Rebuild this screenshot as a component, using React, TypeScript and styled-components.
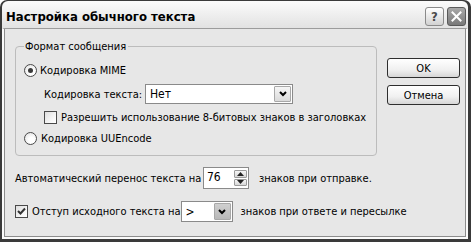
import React from "react";
import styled, { createGlobalStyle } from "styled-components";

const Global = createGlobalStyle`
  html, body { margin: 0; padding: 0; background: #ffffff; }
  body {
    font-family: "DejaVu Sans Condensed", "DejaVu Sans", sans-serif;
    font-stretch: condensed;
    font-size: 11px;
    color: #000;
  }
  * { box-sizing: border-box; }
`;

const Window = styled.div`
  width: 471px;
  height: 242px;
  display: flex;
  flex-direction: column;
  background: #3a3a3a;
  border-radius: 7px 7px 0 0;
  padding: 1px 3px 3px 2px;
`;

const TitleBar = styled.div`
  height: 27px;
  display: flex;
  align-items: flex-start;
  padding: 6px 2px 0 4px;
  background: linear-gradient(#fbfbfb, #ececec 60%, #e2e2e2);
  border-radius: 6px 6px 0 0;
`;

const TitleText = styled.div`
  flex: 1;
  font-weight: bold;
  font-size: 13px;
  line-height: 19px;
  color: #000;
  letter-spacing: 0;
`;

const TitleButton = styled.div<{ $dark?: boolean }>`
  width: 19px;
  height: 19px;
  margin-left: 3px;
  border-radius: 3px;
  border: 1px solid ${(p) => (p.$dark ? "#5a5a5a" : "#8a8a8a")};
  background: ${(p) =>
    p.$dark
      ? "linear-gradient(#a8a8a8, #7a7a7a)"
      : "linear-gradient(#ffffff, #d2d2d2)"};
  display: flex;
  align-items: center;
  justify-content: center;
  font-family: "DejaVu Sans", sans-serif;
  font-weight: bold;
  font-size: 13px;
  color: #4a4a4a;
`;

const Body = styled.div`
  flex: 1;
  display: flex;
  background: #e7e7e7;
  border-top: 1px solid #9c9c9c;
  border-left: 2px solid #fafafa;
  border-right: 2px solid #fafafa;
  border-bottom: 2px solid #fafafa;
  box-shadow: inset 1px 0 #8c8c8c, inset -1px 0 #8c8c8c, inset 0 -1px #8c8c8c;
  padding: 11px 0 0 11px;
`;

const LeftCol = styled.div`
  width: 362px;
  display: flex;
  flex-direction: column;
`;

const RightCol = styled.div`
  margin-left: 10px;
  margin-top: 18px;
  display: flex;
  flex-direction: column;
  gap: 7px;
`;

const PushButton = styled.div`
  width: 73px;
  height: 20px;
  border: 1px solid #2e2e2e;
  border-radius: 3px;
  background: linear-gradient(#ffffff, #f0f0f0 60%, #d6d6d6);
  display: flex;
  align-items: center;
  justify-content: center;
  line-height: 13px;
`;

const Group = styled.fieldset`
  margin: 0;
  padding: 0 0 9px 8px;
  border: 1px solid #bcbcbc;
  border-radius: 4px;
  min-width: 0;
  width: 362px;
`;

const Legend = styled.legend`
  padding: 0 2px 0 1px;
  line-height: 13px;
  height: 13px;
`;

const Row = styled.div<{ $top: number; $indent?: number; $h?: number }>`
  display: flex;
  align-items: center;
  height: ${(p) => p.$h ?? 16}px;
  margin-top: ${(p) => p.$top}px;
  padding-left: ${(p) => p.$indent ?? 0}px;
  white-space: nowrap;
`;

const Label = styled.span<{ $w?: number; $gap?: number }>`
  display: inline-block;
  ${(p) => (p.$w ? `width: ${p.$w}px;` : "")}
  margin-left: ${(p) => p.$gap ?? 0}px;
  line-height: 13px;
`;

const RadioCircle = styled.span<{ $on?: boolean }>`
  width: 13px;
  height: 13px;
  border-radius: 50%;
  border: 1px solid #4a4a4a;
  background: radial-gradient(circle at 60% 65%, #ffffff 30%, #dcdcdc 100%);
  display: flex;
  align-items: center;
  justify-content: center;
  flex: none;
  &::after {
    content: "";
    display: ${(p) => (p.$on ? "block" : "none")};
    width: 5px;
    height: 5px;
    border-radius: 50%;
    background: #3a3a3a;
  }
`;

const CheckBox = styled.span`
  width: 13px;
  height: 13px;
  border: 1px solid #4a4a4a;
  background: linear-gradient(135deg, #dedede, #f8f8f8 70%, #ffffff);
  display: flex;
  align-items: center;
  justify-content: center;
  flex: none;
`;

const Combo = styled.div<{ $w: number; $h: number }>`
  width: ${(p) => p.$w}px;
  height: ${(p) => p.$h}px;
  border: 1px solid #8a8a8a;
  background: #ffffff;
  display: flex;
  align-items: stretch;
  padding: 1px;
  flex: none;
`;

const ComboValue = styled.div`
  flex: 1;
  display: flex;
  align-items: center;
  padding-left: 3px;
  font-size: 12px;
`;

const DropButton = styled.div<{ $shade?: boolean }>`
  width: 17px;
  border: 1px solid #a8a8a8;
  border-radius: 1px;
  background: ${(p) =>
    p.$shade
      ? "linear-gradient(#cfcfcf, #b8b8b8)"
      : "linear-gradient(#f6f6f6, #dadada)"};
  display: flex;
  align-items: center;
  justify-content: center;
`;

const SpinBox = styled.div`
  width: 46px;
  height: 22px;
  border: 1px solid #8a8a8a;
  background: #fff;
  display: flex;
  padding: 1px 0 1px 0;
  flex: none;
`;

const SpinValue = styled.div`
  flex: 1;
  padding-left: 3px;
  padding-top: 1px;
  font-size: 12px;
  line-height: 14px;
`;

const SpinButtons = styled.div`
  width: 14px;
  display: flex;
  flex-direction: column;
  gap: 1px;
  padding: 1px 1px 1px 0;
`;

const SpinButton = styled.div`
  flex: 1;
  border: 1px solid #9a9a9a;
  border-radius: 1px;
  background: linear-gradient(#f6f6f6, #d6d6d6);
  display: flex;
  align-items: center;
  justify-content: center;
`;

const Chevron = () => (
  <svg width="8" height="6" viewBox="0 0 8 6">
    <polyline points="1,1 4,4 7,1" fill="none" stroke="#000" strokeWidth="2" />
  </svg>
);

const Tri = ({ up }: { up?: boolean }) => (
  <svg width="7" height="4" viewBox="0 0 7 4">
    <polygon points={up ? "0,4 3.5,0 7,4" : "0,0 3.5,4 7,0"} fill="#222" />
  </svg>
);

const Tick = () => (
  <svg width="9" height="9" viewBox="0 0 9 9">
    <polyline points="1,4 3.5,6.5 8,1.5" fill="none" stroke="#333" strokeWidth="2" />
  </svg>
);

const CloseX = () => (
  <svg width="11" height="11" viewBox="0 0 11 11">
    <path d="M1.5 1.5 L9.5 9.5 M9.5 1.5 L1.5 9.5" stroke="#ffffff" strokeWidth="2" strokeLinecap="square" />
  </svg>
);

export default function App() {
  return (
    <>
      <Global />
      <Window>
        <TitleBar>
          <TitleText>Настройка обычного текста</TitleText>
          <TitleButton>?</TitleButton>
          <TitleButton $dark>
            <CloseX />
          </TitleButton>
        </TitleBar>
        <Body>
          <LeftCol>
            <Group>
              <Legend>Формат сообщения</Legend>
              <Row $top={9}>
                <RadioCircle $on />
                <Label $gap={3}>Кодировка MIME</Label>
              </Row>
              <Row $top={6} $indent={20} $h={20}>
                <Label $w={101}>Кодировка текста:</Label>
                <Combo $w={148} $h={20}>
                  <ComboValue>Нет</ComboValue>
                  <DropButton>
                    <Chevron />
                  </DropButton>
                </Combo>
              </Row>
              <Row $top={5} $indent={20}>
                <CheckBox />
                <Label $gap={4}>Разрешить использование 8-битовых знаков в заголовках</Label>
              </Row>
              <Row $top={5}>
                <RadioCircle />
                <Label $gap={4}>Кодировка UUEncode</Label>
              </Row>
            </Group>
            <Row $top={11} $h={22}>
              <Label $w={188}>Автоматический перенос текста на</Label>
              <SpinBox>
                <SpinValue>76</SpinValue>
                <SpinButtons>
                  <SpinButton>
                    <Tri up />
                  </SpinButton>
                  <SpinButton>
                    <Tri />
                  </SpinButton>
                </SpinButtons>
              </SpinBox>
              <Label $gap={10}>знаков при отправке.</Label>
            </Row>
            <Row $top={12} $h={21}>
              <CheckBox>
                <Tick />
              </CheckBox>
              <Label $gap={4} $w={155}>Отступ исходного текста на</Label>
              <Combo $w={52} $h={21}>
                <ComboValue>&gt;</ComboValue>
                <DropButton $shade>
                  <Chevron />
                </DropButton>
              </Combo>
              <Label $gap={8}>знаков при ответе и пересылке</Label>
            </Row>
          </LeftCol>
          <RightCol>
            <PushButton>OK</PushButton>
            <PushButton>Отмена</PushButton>
          </RightCol>
        </Body>
      </Window>
    </>
  );
}
